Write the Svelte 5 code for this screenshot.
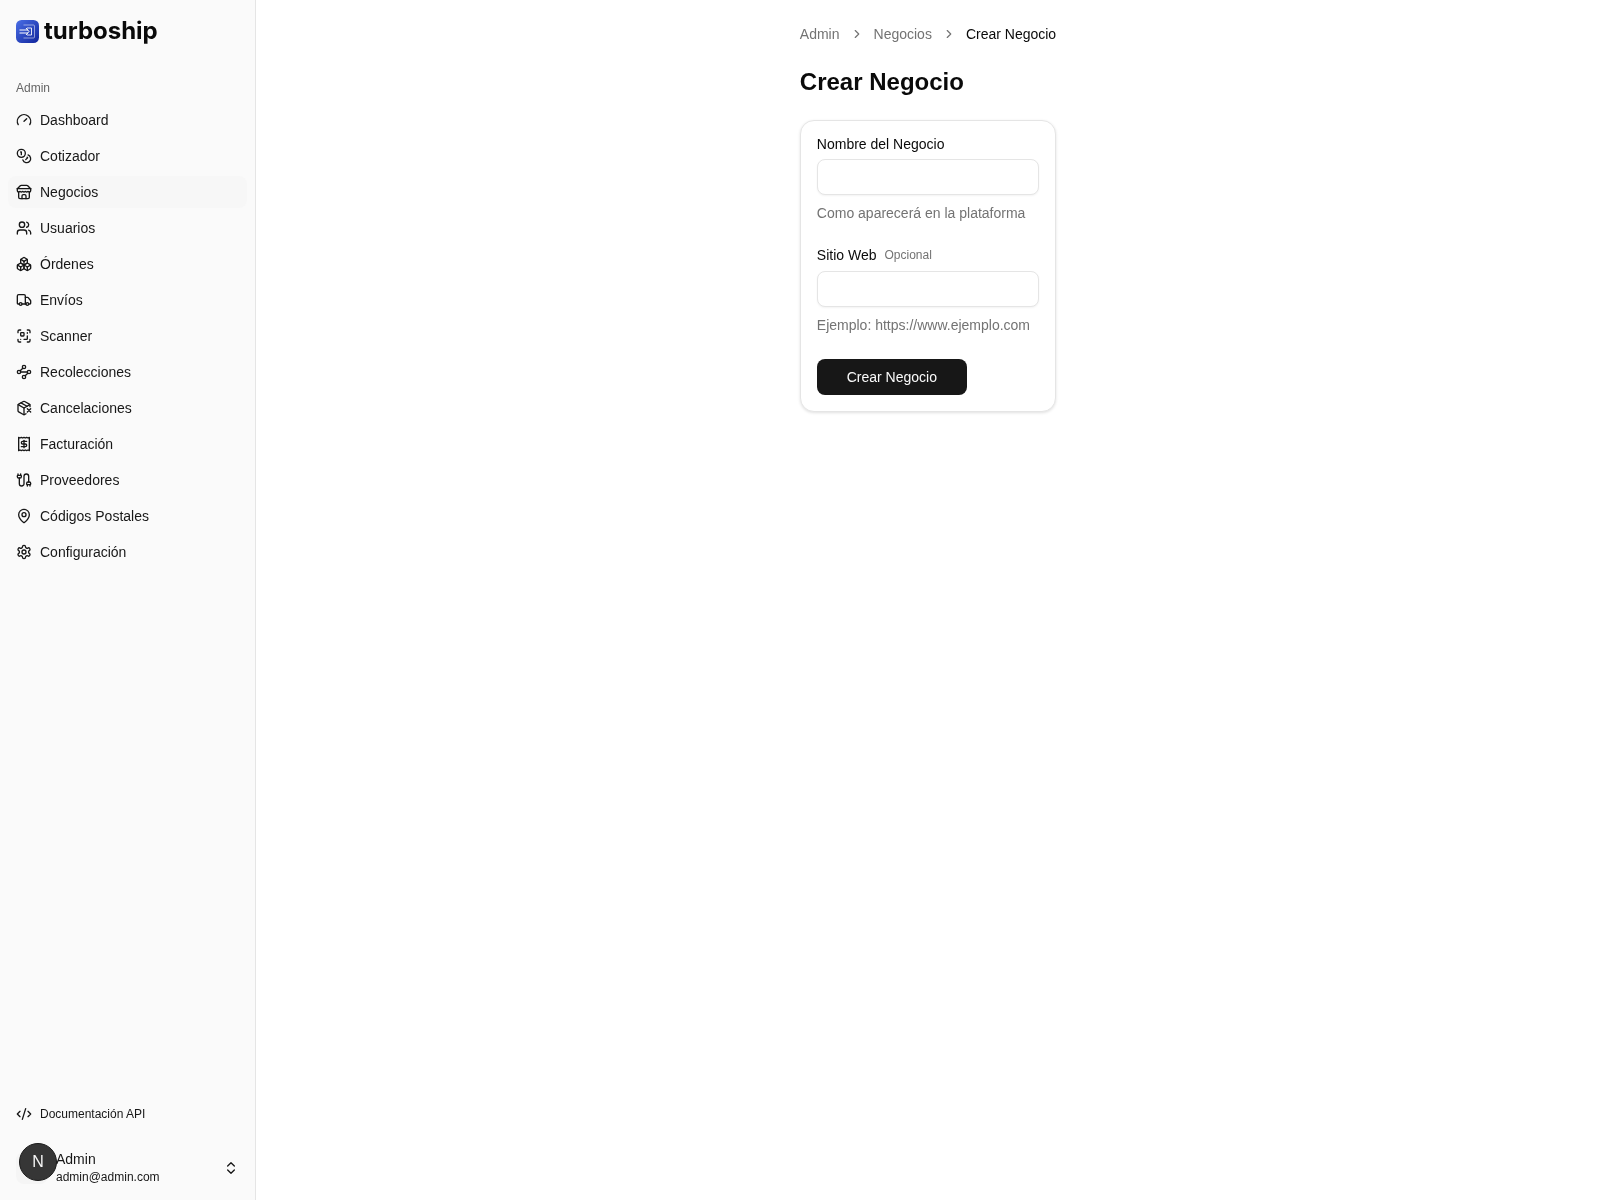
<script lang="ts">
	type Shape = { d?: string[]; c?: number[][]; r?: number[][] };

	const settingsPath =
		'M12.22 2h-.44a2 2 0 0 0-2 2v.18a2 2 0 0 1-1 1.73l-.43.25a2 2 0 0 1-2 0l-.15-.08a2 2 0 0 0-2.73.73l-.22.38a2 2 0 0 0 .73 2.73l.15.1a2 2 0 0 1 1 1.72v.51a2 2 0 0 1-1 1.74l-.15.09a2 2 0 0 0-.73 2.73l.22.38a2 2 0 0 0 2.73.73l.15-.08a2 2 0 0 1 2 0l.43.25a2 2 0 0 1 1 1.73V20a2 2 0 0 0 2 2h.44a2 2 0 0 0 2-2v-.18a2 2 0 0 1 1-1.73l.43-.25a2 2 0 0 1 2 0l.15.08a2 2 0 0 0 2.73-.73l.22-.39a2 2 0 0 0-.73-2.73l-.15-.08a2 2 0 0 1-1-1.74v-.5a2 2 0 0 1 1-1.74l.15-.09a2 2 0 0 0 .73-2.73l-.22-.38a2 2 0 0 0-2.73-.73l-.15.08a2 2 0 0 1-2 0l-.43-.25a2 2 0 0 1-1-1.73V4a2 2 0 0 0-2-2z';

	const nav: { label: string; icon: Shape; active?: boolean }[] = [
		{ label: 'Dashboard', icon: { d: ['m12 14 4-4', 'M3.34 19a10 10 0 1 1 17.32 0'] } },
		{
			label: 'Cotizador',
			icon: {
				c: [[8, 8, 6]],
				d: ['M18.09 10.37A6 6 0 1 1 10.34 18', 'M7 6h1v4', 'm16.71 13.88.7.71-2.82 2.82']
			}
		},
		{
			label: 'Negocios',
			active: true,
			icon: {
				d: [
					'm2 7 4.41-4.41A2 2 0 0 1 7.83 2h8.34a2 2 0 0 1 1.42.59L22 7',
					'M4 12v8a2 2 0 0 0 2 2h12a2 2 0 0 0 2-2v-8',
					'M15 22v-4a2 2 0 0 0-2-2h-2a2 2 0 0 0-2 2v4',
					'M2 7h20',
					'M22 7v3a2 2 0 0 1-2 2a2.7 2.7 0 0 1-1.59-.63.7.7 0 0 0-.82 0A2.7 2.7 0 0 1 16 12a2.7 2.7 0 0 1-1.59-.63.7.7 0 0 0-.82 0A2.7 2.7 0 0 1 12 12a2.7 2.7 0 0 1-1.59-.63.7.7 0 0 0-.82 0A2.7 2.7 0 0 1 8 12a2.7 2.7 0 0 1-1.59-.63.7.7 0 0 0-.82 0A2.7 2.7 0 0 1 4 12a2 2 0 0 1-2-2V7'
				]
			}
		},
		{
			label: 'Usuarios',
			icon: {
				c: [[9, 7, 4]],
				d: [
					'M16 21v-2a4 4 0 0 0-4-4H6a4 4 0 0 0-4 4v2',
					'M22 21v-2a4 4 0 0 0-3-3.87',
					'M16 3.13a4 4 0 0 1 0 7.75'
				]
			}
		},
		{
			label: 'Órdenes',
			icon: {
				d: [
					'M2.97 12.92A2 2 0 0 0 2 14.63v3.24a2 2 0 0 0 .97 1.71l3 1.8a2 2 0 0 0 2.06 0L12 19v-5.5l-5-3-4.03 2.42Z',
					'm7 16.5-4.74-2.85',
					'm7 16.5 5-3',
					'M7 16.5v5.17',
					'M12 13.5V19l3.97 2.38a2 2 0 0 0 2.06 0l3-1.8a2 2 0 0 0 .97-1.71v-3.24a2 2 0 0 0-.97-1.71L17 10.5l-5 3Z',
					'm17 16.5-5-3',
					'm17 16.5 4.74-2.85',
					'M17 16.5v5.17',
					'M7.97 4.42A2 2 0 0 0 7 6.13v4.37l5 3 5-3V6.13a2 2 0 0 0-.97-1.71l-3-1.8a2 2 0 0 0-2.06 0l-3 1.8Z',
					'M12 8 7.26 5.15',
					'm12 8 4.74-2.85',
					'M12 13.5V8'
				]
			}
		},
		{
			label: 'Envíos',
			icon: {
				c: [
					[17, 18, 2],
					[7, 18, 2]
				],
				d: [
					'M14 18V6a2 2 0 0 0-2-2H4a2 2 0 0 0-2 2v11a1 1 0 0 0 1 1h2',
					'M15 18H9',
					'M19 18h2a1 1 0 0 0 1-1v-3.65a1 1 0 0 0-.22-.624l-3.48-4.35A1 1 0 0 0 17.52 8H14'
				]
			}
		},
		{
			label: 'Scanner',
			icon: {
				r: [[7, 7, 5, 5, 1]],
				d: [
					'M17 12v4a1 1 0 0 1-1 1h-4',
					'M17 3h2a2 2 0 0 1 2 2v2',
					'M17 8V7',
					'M21 17v2a2 2 0 0 1-2 2h-2',
					'M3 7V5a2 2 0 0 1 2-2h2',
					'M7 17h.01',
					'M7 21H5a2 2 0 0 1-2-2v-2'
				]
			}
		},
		{
			label: 'Recolecciones',
			icon: {
				c: [
					[12, 4.5, 2.5],
					[4.5, 12, 2.5],
					[19.5, 12, 2.5],
					[12, 19.5, 2.5]
				],
				d: ['m10.2 6.3-3.9 3.9', 'M7 12h10', 'm13.8 17.7 3.9-3.9']
			}
		},
		{
			label: 'Cancelaciones',
			icon: {
				d: [
					'M21 10V8a2 2 0 0 0-1-1.73l-7-4a2 2 0 0 0-2 0l-7 4A2 2 0 0 0 3 8v8a2 2 0 0 0 1 1.73l7 4a2 2 0 0 0 2 0l2-1.14',
					'm7.5 4.27 9 5.15',
					'M3.29 7 12 12l8.71-5',
					'M12 22V12',
					'm17 13 5 5m-5 0 5-5'
				]
			}
		},
		{
			label: 'Facturación',
			icon: {
				d: [
					'M4 2v20l2-1 2 1 2-1 2 1 2-1 2 1 2-1 2 1V2l-2 1-2-1-2 1-2-1-2 1-2-1-2 1Z',
					'M16 8h-6a2 2 0 1 0 0 4h4a2 2 0 1 1 0 4H8',
					'M12 17.5v-11'
				]
			}
		},
		{
			label: 'Proveedores',
			icon: {
				d: [
					'M17 21v-2a1 1 0 0 1-1-1v-1a2 2 0 0 1 2-2h2a2 2 0 0 1 2 2v1a1 1 0 0 1-1 1',
					'M19 15V6.5a1 1 0 0 0-7 0v11a1 1 0 0 1-7 0V9',
					'M21 21v-2h-4',
					'M3 5h4V3',
					'M7 5a1 1 0 0 1 1 1v1a2 2 0 0 1-2 2H4a2 2 0 0 1-2-2V6a1 1 0 0 1 1-1V3'
				]
			}
		},
		{
			label: 'Códigos Postales',
			icon: {
				c: [[12, 10, 3]],
				d: ['M20 10c0 4.993-5.539 10.193-7.399 11.799a1 1 0 0 1-1.202 0C9.539 20.193 4 14.993 4 10a8 8 0 0 1 16 0']
			}
		},
		{ label: 'Configuración', icon: { c: [[12, 12, 3]], d: [settingsPath] } }
	];

	const codeIcon: Shape = { d: ['m18 16 4-4-4-4', 'm6 8-4 4 4 4', 'm14.5 4-5 16'] };
	const updownIcon: Shape = { d: ['m7 15 5 5 5-5', 'm7 9 5-5 5 5'] };
	const chevronIcon: Shape = { d: ['m9 18 6-6-6-6'] };
</script>

{#snippet icon(shape: Shape, size = 16)}
	<svg
		width={size}
		height={size}
		viewBox="0 0 24 24"
		fill="none"
		stroke="currentColor"
		stroke-width="2"
		stroke-linecap="round"
		stroke-linejoin="round"
	>
		{#each shape.d ?? [] as d}
			<path {d} />
		{/each}
		{#each shape.c ?? [] as c}
			<circle cx={c[0]} cy={c[1]} r={c[2]} />
		{/each}
		{#each shape.r ?? [] as r}
			<rect x={r[0]} y={r[1]} width={r[2]} height={r[3]} rx={r[4]} />
		{/each}
	</svg>
{/snippet}

<div class="layout">
	<aside class="sidebar">
		<div class="brand">
			<svg class="logo" width="23" height="23" viewBox="0 0 23 23">
				<defs>
					<linearGradient id="logo-bg" x1="0" y1="0" x2="1" y2="1">
						<stop offset="0" stop-color="#4a6fe6" />
						<stop offset="1" stop-color="#10249c" />
					</linearGradient>
				</defs>
				<rect width="23" height="23" rx="5.5" fill="url(#logo-bg)" />
				<g fill="none" stroke="#fff" stroke-width="1">
					<path d="M7.5 5h10a1 1 0 0 1 1 1v11a1 1 0 0 1-1 1h-10" opacity="0.5" />
					<path d="M11 8h4.5v7H11" opacity="0.85" />
					<path d="M3.5 10h8.5M3.5 13h8.5M10 8l3 3.5-3 3.5" />
				</g>
			</svg>
			<span class="wordmark">turboship</span>
		</div>

		<div class="group-label">Admin</div>
		<nav class="menu">
			{#each nav as item}
				<a class="item" class:active={item.active} href="#top">
					{@render icon(item.icon)}
					<span>{item.label}</span>
				</a>
			{/each}
		</nav>

		<div class="bottom">
			<a class="item small" href="#top">
				{@render icon(codeIcon)}
				<span>Documentación API</span>
			</a>
			<div class="user">
				<div class="avatar-box">
					<div class="avatar">N</div>
				</div>
				<div class="user-text">
					<span class="user-name">Admin</span>
					<span class="user-mail">admin@admin.com</span>
				</div>
				{@render icon(updownIcon)}
			</div>
		</div>
	</aside>

	<main class="main">
		<div class="content">
			<ol class="crumbs">
				<li>Admin</li>
				<li class="sep">{@render icon(chevronIcon, 14)}</li>
				<li>Negocios</li>
				<li class="sep">{@render icon(chevronIcon, 14)}</li>
				<li class="current">Crear Negocio</li>
			</ol>

			<h1>Crear Negocio</h1>

			<form class="card">
				<div class="field">
					<label for="nombre">Nombre del Negocio</label>
					<input id="nombre" type="text" />
					<p class="hint">Como aparecerá en la plataforma</p>
				</div>
				<div class="field">
					<label for="web">Sitio Web <span class="optional">Opcional</span></label>
					<input id="web" type="text" />
					<p class="hint">Ejemplo: https://www.ejemplo.com</p>
				</div>
				<button type="button">Crear Negocio</button>
			</form>
		</div>
	</main>
</div>

<style>
	:global(body) {
		font-family: 'Liberation Sans', Arial, sans-serif;
		color: #0a0a0a;
		background: #fff;
	}
	.layout {
		display: flex;
		min-height: 100vh;
		will-change: transform;
	}
	.sidebar {
		box-sizing: border-box;
		width: 256px;
		flex-shrink: 0;
		display: flex;
		flex-direction: column;
		padding: 8px;
		background: #fafafa;
		border-right: 1px solid #e5e5e5;
	}
	.brand {
		display: flex;
		align-items: center;
		gap: 5px;
		height: 46px;
		padding: 0 8px;
		margin-bottom: 18px;
	}
	.logo {
		flex-shrink: 0;
	}
	.wordmark {
		font-family: Inter, sans-serif;
		font-weight: 700;
		font-size: 24px;
		margin-top: -2px;
	}
	.group-label {
		height: 32px;
		line-height: 32px;
		padding: 0 8px;
		font-size: 12px;
		color: #666;
	}
	.menu {
		display: flex;
		flex-direction: column;
		gap: 4px;
	}
	.item {
		display: flex;
		align-items: center;
		gap: 8px;
		height: 32px;
		padding: 0 8px;
		border-radius: 8px;
		font-size: 14px;
		color: #171717;
		text-decoration: none;
	}
	.item svg {
		flex-shrink: 0;
	}
	.item.active {
		background: #f7f7f7;
	}
	.item.small {
		font-size: 12px;
	}
	.bottom {
		margin-top: auto;
		display: flex;
		flex-direction: column;
		gap: 14px;
	}
	.user {
		display: flex;
		align-items: center;
		gap: 8px;
		height: 48px;
		padding: 0 8px;
		color: #171717;
	}
	.avatar-box {
		position: relative;
		width: 32px;
		height: 32px;
		flex-shrink: 0;
		border-radius: 8px;
		background: #f5f5f5;
	}
	.avatar {
		position: absolute;
		left: 3px;
		top: -9px;
		box-sizing: border-box;
		width: 38px;
		height: 38px;
		border-radius: 50%;
		background: #363636;
		border: 1px solid #1a1a1a;
		color: #f5f5f5;
		display: flex;
		align-items: center;
		justify-content: center;
		font-size: 16px;
	}
	.user-text {
		flex: 1;
		min-width: 0;
		display: flex;
		flex-direction: column;
		margin-top: -2px;
	}
	.user-name {
		font-size: 14px;
		line-height: 20px;
	}
	.user-mail {
		font-size: 12px;
		line-height: 16px;
	}
	.main {
		flex: 1;
		min-width: 0;
		padding-top: 24px;
	}
	.content {
		width: fit-content;
		margin: 0 auto;
	}
	.crumbs {
		display: flex;
		align-items: center;
		gap: 10px;
		list-style: none;
		margin: 0;
		padding: 0;
		font-size: 14px;
		line-height: 20px;
		color: #737373;
	}
	.sep {
		display: flex;
	}
	.current {
		color: #0a0a0a;
	}
	h1 {
		margin: 22px 0;
		font-size: 24px;
		line-height: 32px;
		font-weight: 700;
	}
	.card {
		box-sizing: border-box;
		width: 256px;
		display: flex;
		flex-direction: column;
		gap: 24px;
		padding: 16px;
		background: #fff;
		border: 1px solid #e5e5e5;
		border-radius: 14px;
		box-shadow: 0 1px 3px rgba(0, 0, 0, 0.12);
	}
	.field {
		display: flex;
		flex-direction: column;
		gap: 8px;
	}
	label {
		font-size: 14px;
		line-height: 14px;
		display: flex;
		align-items: center;
		gap: 8px;
	}
	.optional {
		font-size: 12px;
		line-height: 16px;
		color: #737373;
	}
	input {
		box-sizing: border-box;
		width: 100%;
		height: 36px;
		border: 1px solid #e5e5e5;
		border-radius: 8px;
		background: #fff;
		box-shadow: 0 1px 2px rgba(0, 0, 0, 0.05);
		outline: none;
	}
	.hint {
		margin: 0;
		font-size: 14px;
		line-height: 20px;
		color: #737373;
	}
	button {
		width: 150px;
		height: 36px;
		border: none;
		border-radius: 8px;
		background: #171717;
		color: #fafafa;
		font: inherit;
		font-size: 14px;
	}
</style>
